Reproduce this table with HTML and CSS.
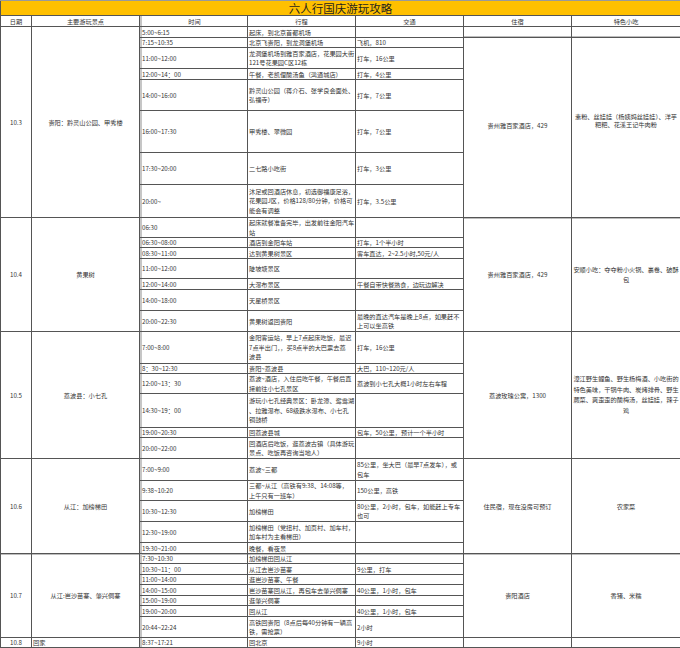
FILE: index.html
```html
<!DOCTYPE html>
<html lang="zh-CN">
<head>
<meta charset="utf-8">
<title>六人行国庆游玩攻略</title>
<link rel="stylesheet" href="styles.css">
</head>
<body>
<table class="sheet">
<colgroup>
<col class="c-date"><col class="c-col"><col class="c-col"><col class="c-col"><col class="c-col"><col class="c-col"><col class="c-last">
</colgroup>
<tr class="h15"><td colspan="7" class="title">六人行国庆游玩攻略</td></tr>
<tr class="h11 head"><td>日期</td><td>主要游玩景点</td><td class="t">时间</td><td>行程</td><td>交通</td><td>住宿</td><td>特色小吃</td></tr>

<tr class="h11"><td rowspan="8" class="ctr">10.3</td><td rowspan="8" class="ctr">贵阳：黔灵山公园、甲秀楼</td><td class="t">5:00~6:15</td><td>起床，到北京首都机场</td><td></td><td class="gbot"></td><td class="gbot"></td></tr>
<tr class="h10"><td class="t">7:15~10:35</td><td>北京飞贵阳，到龙洞堡机场</td><td>飞机，810</td><td rowspan="7" class="ctr stay-up">贵州雅百家酒店，429</td><td rowspan="7" class="ctr food-tight">素粉、丝娃娃（杨姨妈丝娃娃）、洋芋<br>粑粑、花溪王记牛肉粉</td></tr>
<tr class="h21"><td class="t">11:00~12:00</td><td class="ml">龙洞堡机场到雅百家酒店，花果园大街<br>121号花果园C区12栋</td><td>打车，16公里</td></tr>
<tr class="h11"><td class="t">12:00~14：00</td><td>午餐，老凯俚酸汤鱼（鸿通城店）</td><td>打车，4公里</td></tr>
<tr class="h31"><td class="t">14:00~16:00</td><td class="ml">黔灵山公园（蒋介石、张学良会面处、<br>弘福寺）</td><td>打车，7公里</td></tr>
<tr class="h42"><td class="t">16:00~17:30</td><td>甲秀楼、翠微园</td><td>打车，7公里</td></tr>
<tr class="h32"><td class="t">17:30~20:00</td><td>二七路小吃街</td><td>打车，3公里</td></tr>
<tr class="h33"><td class="t">20:00~</td><td class="ml">沐足或回酒店休息，初选御福康足浴，<br>花果园J区，价格128/80分钟，价格可<br>能会有调整</td><td>打车，3.5公里</td></tr>

<tr class="h20"><td rowspan="7" class="ctr">10.4</td><td rowspan="7" class="ctr">黄果树</td><td class="t">06:30</td><td class="ml">起床就餐准备完毕，出发前往金阳汽车<br>站</td><td></td><td rowspan="7" class="ctr gtop">贵州雅百家酒店，429</td><td rowspan="7" class="ctr ml gtop">安顺小吃：夺夺粉小火锅、裹卷、破酥<br>包</td></tr>
<tr class="h10"><td class="t">06:30~08:00</td><td>酒店到金阳车站</td><td>打车，1个半小时</td></tr>
<tr class="h11"><td class="t">08:30~11:00</td><td>达到黄果树景区</td><td>客车直达，2~2.5小时,50元/人</td></tr>
<tr class="h20"><td class="t">11:00~12:00</td><td>陡坡塘景区</td><td></td></tr>
<tr class="h11"><td class="t">12:00~14:00</td><td>大瀑布景区</td><td>午餐自带快餐熟食，边玩边解决</td></tr>
<tr class="h21"><td class="t">14:00~18:00</td><td>天星桥景区</td><td></td></tr>
<tr class="h21"><td class="t">20:00~22:30</td><td>黄果树返回贵阳</td><td class="ml">最晚的直达汽车是晚上8点，如果赶不<br>上可以坐高铁</td></tr>

<tr class="h32"><td rowspan="6" class="ctr">10.5</td><td rowspan="6" class="ctr">荔波县：小七孔</td><td class="t">7:00~8:00</td><td class="ml">金阳客运站，早上7点起床吃饭，最迟<br>7点半出门，，买8点半的大巴票去荔<br>波县</td><td>打车，16公里</td><td rowspan="6" class="ctr">荔波玫瑰公寓，1300</td><td rowspan="6" class="ctr ml-wide">漳江野生鲤鱼、野生杨梅酒、小吃街的<br>特色美味，干锅牛肉、炭烤排骨、野生<br>蕨菜、爽歪歪的酸梅汤，丝娃娃，辣子<br>鸡</td></tr>
<tr class="h10"><td class="t">8：30~12:30</td><td>贵阳~荔波县</td><td>大巴，110~120元/人</td></tr>
<tr class="h20"><td class="t">12:00~13：30</td><td class="ml">荔波~酒店，入住后吃午餐，午餐后直<br>接前往小七孔景区</td><td>荔波到小七孔大概1小时左右车程</td></tr>
<tr class="h34"><td class="t">14:30~19：00</td><td class="ml">游玩小七孔经典景区：卧龙潭、鸳鸯湖<br>、拉雅瀑布、68级跌水瀑布、小七孔<br>铜鼓桥</td><td></td></tr>
<tr class="h10"><td class="t">19:00~20:30</td><td>回荔波县城</td><td>包车，50公里，预计一个半小时</td></tr>
<tr class="h21"><td class="t">20:00~22:00</td><td class="ml">回酒店后吃饭，逛荔波古镇（具体游玩<br>景点、吃饭再咨询当地人）</td><td></td></tr>

<tr class="h22"><td rowspan="5" class="ctr">10.6</td><td rowspan="5" class="ctr">从江：加榜梯田</td><td class="t">7:00~9:00</td><td>荔波~三都</td><td class="ml">85公里，坐大巴（最早7点发车），或<br>包车</td><td rowspan="5" class="ctr">住民宿，现在没房可预订</td><td rowspan="5" class="ctr">农家菜</td></tr>
<tr class="h20"><td class="t">9:38~10:20</td><td class="ml">三都~从江（高铁有9:38、14:08等，<br>上午只有一班车）</td><td>150公里，高铁</td></tr>
<tr class="h21"><td class="t">10:30~12:30</td><td>加榜梯田</td><td class="ml">80公里，2小时，包车，如能赶上专车<br>也可</td></tr>
<tr class="h21"><td class="t">12:30~19:00</td><td class="ml">加榜梯田（党扭村、加页村、加车村，<br>加车村为主看梯田）</td><td></td></tr>
<tr class="h11"><td class="t">19:30~21:00</td><td>晚餐，看夜景</td><td></td></tr>

<tr class="h10 sep"><td rowspan="7" class="ctr">10.7</td><td rowspan="7" class="ctr">从江:岜沙苗寨、肇兴侗寨</td><td class="t">7:30~10:30</td><td>加榜梯田回从江</td><td></td><td rowspan="7" class="ctr">贵阳酒店</td><td rowspan="7" class="ctr">香猪、米糯</td></tr>
<tr class="h11"><td class="t">10:30~11：00</td><td>从江去岜沙苗寨</td><td>9公里，打车</td></tr>
<tr class="h10"><td class="t">11:00~14:00</td><td>逛岜沙苗寨、午餐</td><td></td></tr>
<tr class="h11"><td class="t">14:00~15:00</td><td>岜沙苗寨回从江，再包车去肇兴侗寨</td><td>40公里，1小时，包车</td></tr>
<tr class="h10"><td class="t">15:00~19:00</td><td>逛肇兴侗寨</td><td></td></tr>
<tr class="h11"><td class="t">19:00~20:00</td><td>回从江</td><td>40公里，1小时，包车</td></tr>
<tr class="h21"><td class="t">20:44~22:24</td><td class="ml">高铁回贵阳（8点后每40分钟有一辆高<br>铁，需抢票）</td><td>2小时</td></tr>

<tr class="h10"><td class="ctr">10.8</td><td>回家</td><td class="t">8:37~17:21</td><td>回北京</td><td>9小时</td><td></td><td></td></tr>
</table>
</body>
</html>
```

FILE: styles.css
```css
html, body {
  margin: 0;
  padding: 0;
  background: #ffffff;
}

body {
  font-family: "Noto Sans CJK SC", "Noto Sans", sans-serif;
}

.sheet {
  border-collapse: collapse;
  table-layout: fixed;
  width: 680px;
  font-size: 6.2px;
  color: #333333;
}

.c-date { width: 31px; }
.c-col { width: 108px; }
.c-last { width: 109px; }

.sheet td {
  border: 1px solid #555555;
  padding: 0 0 0 1px;
  line-height: 9px;
  vertical-align: middle;
  white-space: nowrap;
  overflow: hidden;
  text-align: left;
}

.sheet td.title {
  background: #ffc000;
  text-align: center;
  font-size: 11.5px;
  line-height: 13px;
  color: #1e1e1e;
  border-top-color: #9a9a9a;
  padding: 0;
}

.head td {
  text-align: center;
  padding: 0;
}

.sheet td.ctr {
  text-align: center;
  padding: 0;
}

.sheet td.t {
  padding-left: 2px;
  box-shadow: inset 2px 0 0 #c6c6c6;
}

.sheet td.ml { line-height: 9.5px; }
.sheet td.ml-wide { line-height: 10.5px; }

.sheet td.food-tight {
  line-height: 8px;
  padding-bottom: 14px;
}

.sheet td.stay-up { padding-bottom: 4px; }

.sheet td.gbot { box-shadow: inset 0 -1px 0 #bdbdbd; }
.sheet td.gtop { box-shadow: inset 0 1px 0 #bdbdbd; }

.sep td { box-shadow: inset 0 1px 0 #bdbdbd; }
.sep td.t { box-shadow: inset 2px 0 0 #c6c6c6, inset 0 1px 0 #bdbdbd; }

.h10 { height: 10px; }
.h11 { height: 11px; }
.h15 { height: 15px; }
.h20 { height: 20px; }
.h21 { height: 21px; }
.h22 { height: 22px; }
.h31 { height: 31px; }
.h32 { height: 32px; }
.h33 { height: 33px; }
.h34 { height: 34px; }
.h42 { height: 42px; }
```
